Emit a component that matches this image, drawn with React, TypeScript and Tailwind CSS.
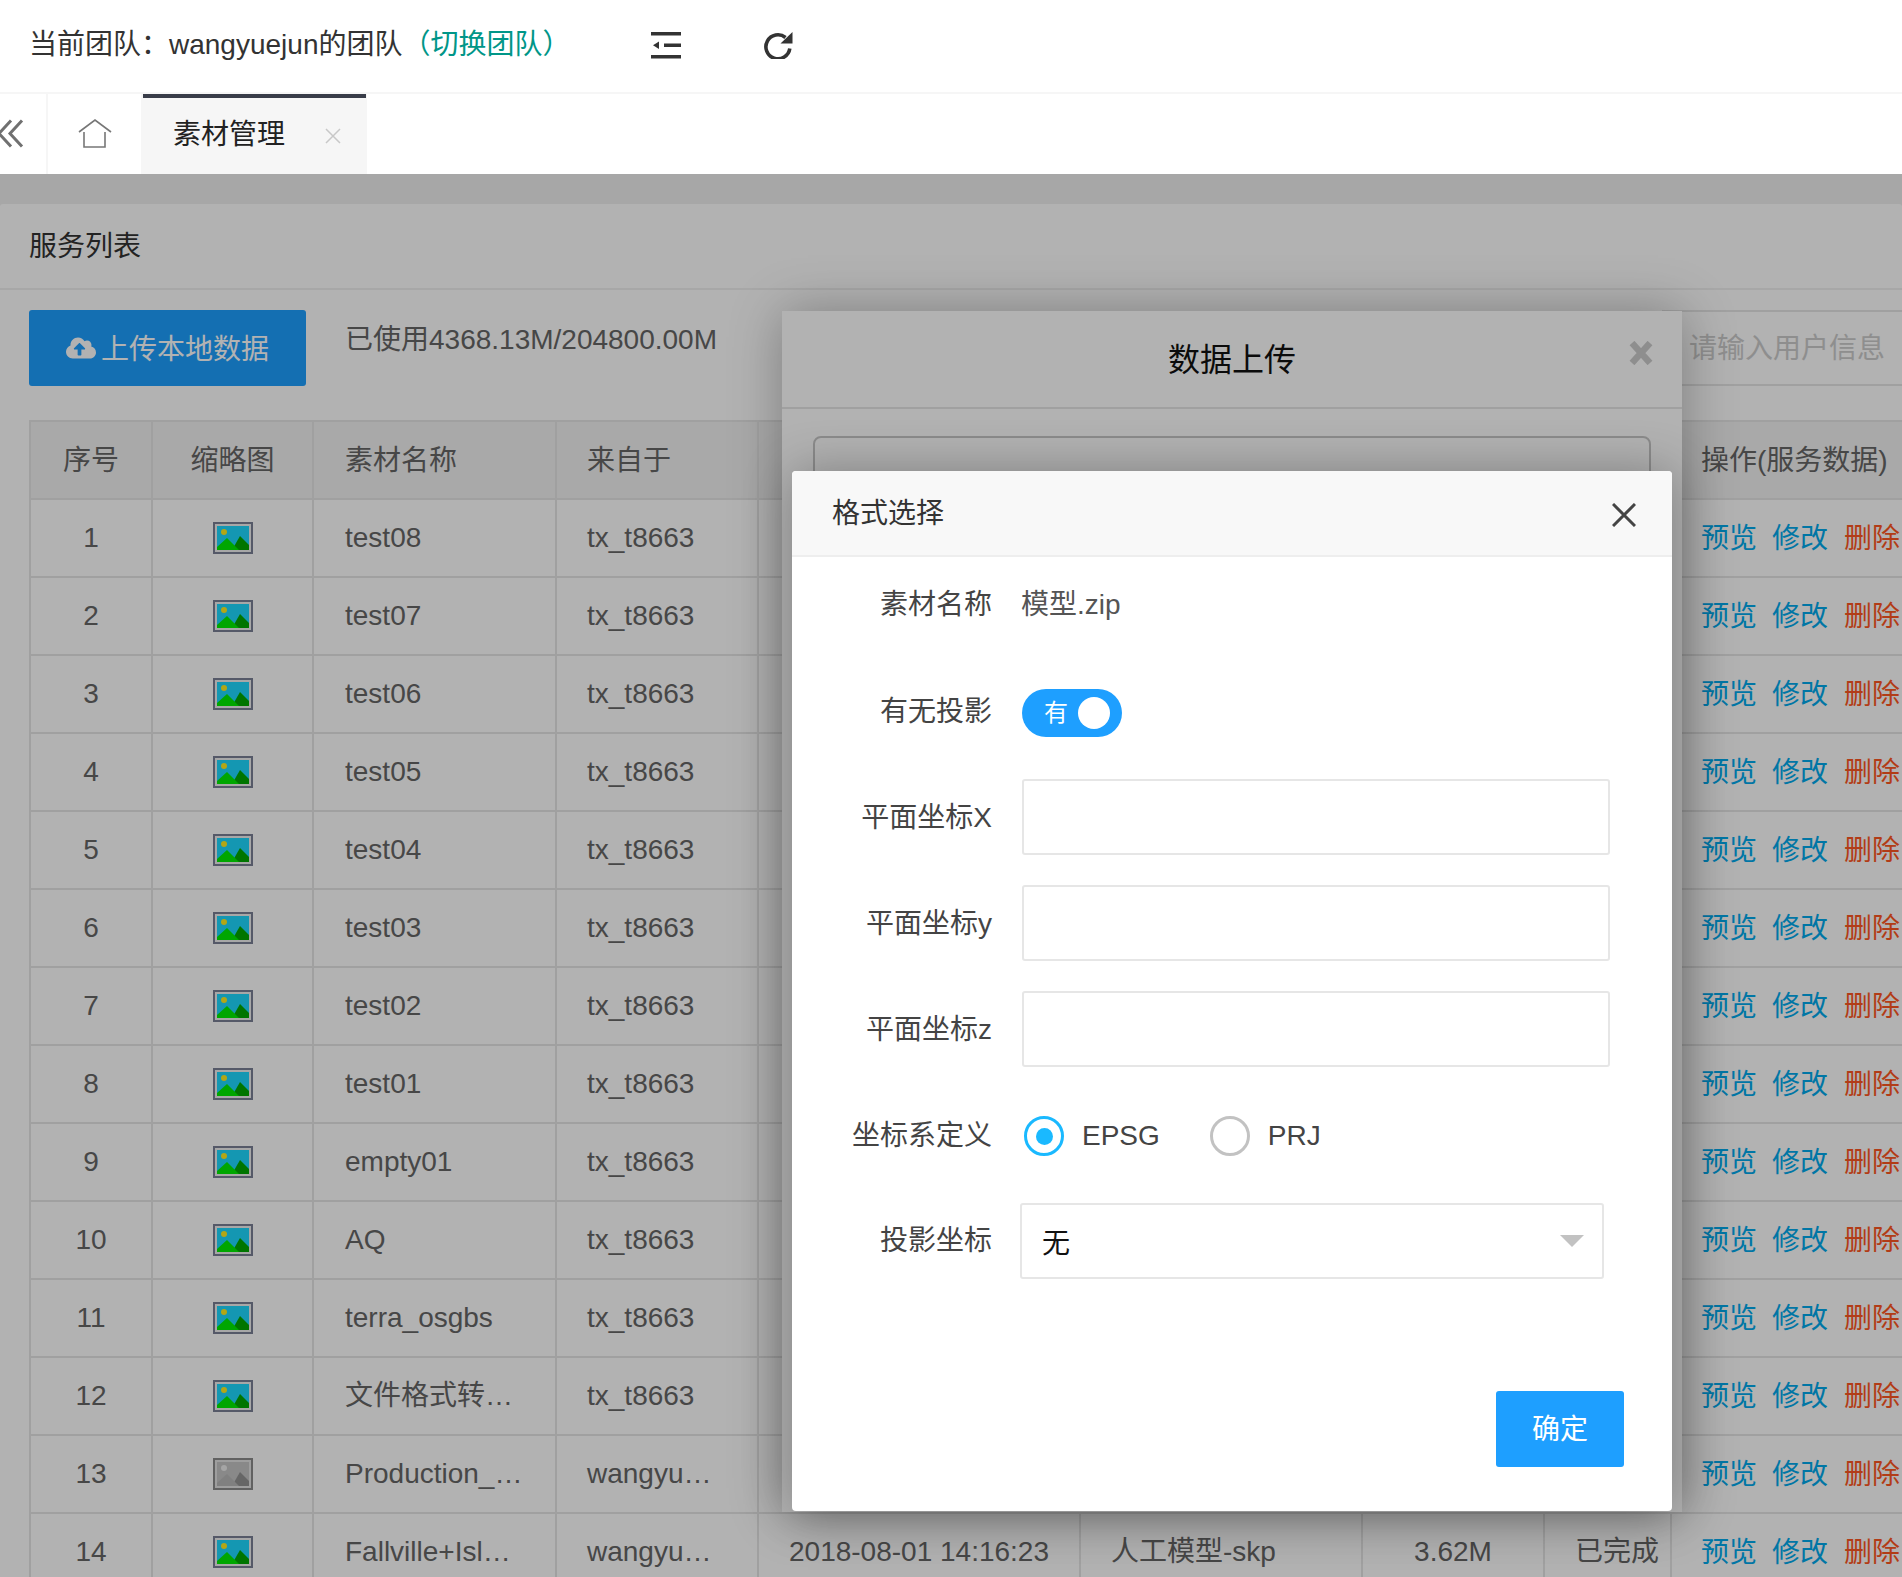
import { FaCloudUploadAlt } from "react-icons/fa";

const rows: [string, string, string][] = [
  ["1", "test08", "tx_t8663"],
  ["2", "test07", "tx_t8663"],
  ["3", "test06", "tx_t8663"],
  ["4", "test05", "tx_t8663"],
  ["5", "test04", "tx_t8663"],
  ["6", "test03", "tx_t8663"],
  ["7", "test02", "tx_t8663"],
  ["8", "test01", "tx_t8663"],
  ["9", "empty01", "tx_t8663"],
  ["10", "AQ", "tx_t8663"],
  ["11", "terra_osgbs", "tx_t8663"],
  ["12", "文件格式转…", "tx_t8663"],
  ["13", "Production_…", "wangyu…"],
  ["14", "Fallville+Isl…", "wangyu…"],
];

function Thumb({ gray }: { gray?: boolean }) {
  const c = gray
    ? { outer: "#8c8c8c", inner: "#e2e2e2", sky: "#c4c4c4", sun: "#ececec", m1: "#b8b8b8", m2: "#939393" }
    : { outer: "#7a8096", inner: "#f0f0f0", sky: "#1ed8ff", sun: "#ffee20", m1: "#00ee00", m2: "#00a800" };
  return (
    <svg width="40" height="32" viewBox="0 0 40 32" className="mx-auto block">
      <rect x="0" y="0" width="40" height="32" fill={c.outer} />
      <rect x="2" y="2" width="36" height="28" fill={c.inner} />
      <rect x="4" y="4" width="32" height="24" fill={c.sky} />
      <circle cx="11" cy="10" r="3" fill={c.sun} />
      <path d="M19 28 L27 14 L36 23 L36 28 Z" fill={c.m2} />
      <path d="M4 28 L4 25 L14 16 L26 28 Z" fill={c.m1} />
    </svg>
  );
}

function Label({ children }: { children: string }) {
  return <div className="w-[200px] shrink-0 text-right text-[#444]">{children}</div>;
}

function Field({ label, top }: { label: string; top: string }) {
  return (
    <div className={`flex h-[76px] items-center ${top}`}>
      <div className="translate-y-[1px]">
        <Label>{label}</Label>
      </div>
      <div className="ml-[30px] h-[76px] w-[588px] rounded-[3px] border-2 border-[#e6e6e6] bg-white" />
    </div>
  );
}

const cell = "border-2 border-[#e6e6e6] h-[78px] p-0 pl-[30px] text-left font-normal whitespace-nowrap";
const cellName = "border-2 border-[#e6e6e6] h-[78px] p-0 pl-[31px] text-left font-normal whitespace-nowrap";
const cellLast = "border-2 border-[#e6e6e6] h-[78px] p-0 pl-[29px] text-left font-normal whitespace-nowrap";
const cellC = "border-2 border-[#e6e6e6] h-[78px] p-0 text-center font-normal whitespace-nowrap";

export default function App() {
  return (
    <div className="relative h-[1577px] w-[1902px] overflow-hidden bg-[#f0f0f0] font-['Liberation_Sans','Noto_Sans_CJK_SC',sans-serif] text-[28px] text-[#666]">
      {/* top bar */}
      <div className="flex h-[94px] items-center border-b-2 border-[#f6f6f6] bg-white pl-[29px]">
        <div className="w-[622px] -translate-y-[1px] text-[#333]">
          当前团队：wangyuejun的团队<span className="text-[#009688]">（切换团队）</span>
        </div>
        <svg width="30" height="27" viewBox="0 0 30 27" className="text-[#333] -mt-[1px]">
          <rect x="0" y="0" width="30" height="3.5" fill="currentColor" />
          <rect x="13" y="11.5" width="17" height="3.5" fill="currentColor" />
          <path d="M2 13.3 L8 9.5 L8 17 Z" fill="currentColor" />
          <rect x="0" y="23" width="30" height="3.5" fill="currentColor" />
        </svg>
        <svg width="29" height="28" viewBox="0 0 29 28" className="ml-[83px] -mt-[2px]">
          <path d="M21.5 6.5 A12 12 0 1 0 25.8 17.5" fill="none" stroke="#333" strokeWidth="3.6" />
          <path d="M28.5 1 L28.5 12.5 L16.5 12.5 Z" fill="#333" />
        </svg>
      </div>

      {/* tab bar */}
      <div className="flex h-[80px] bg-white">
        <div className="flex h-full w-[48px] shrink-0 items-center overflow-hidden border-r-2 border-[#f6f6f6]">
          <svg width="24" height="30" viewBox="0 0 24 30" className="shrink-0">
            <path d="M11 1.5 L-1 14.5 L11 27.5 M22 1.5 L10 14.5 L22 27.5" fill="none" stroke="#707070" strokeWidth="3" />
          </svg>
        </div>
        <div className="flex h-full w-[93px] shrink-0 items-center justify-center">
          <svg width="34" height="30" viewBox="0 0 34 30">
            <path d="M1 13 L17 1 L33 13 M6 13 L6 28 L27 28 L27 13" fill="none" stroke="#777" strokeWidth="1.6" />
          </svg>
        </div>
        <div className="relative flex h-full w-[226px] shrink-0 items-center bg-[#f6f6f6] pl-[32px] text-[#222]">
          <div className="absolute left-[2px] right-[1px] top-0 h-[4px] bg-[#393d49]" />
          <span className="translate-y-[1px]">素材管理</span>
          <svg width="16" height="16" viewBox="0 0 16 16" className="ml-[40px] mt-[3px]">
            <path d="M1 1 L15 15 M15 1 L1 15" stroke="#c8c8c8" strokeWidth="1.5" />
          </svg>
        </div>
      </div>

      {/* page body */}
      <div className="pt-[30px]">
        <div className="rounded-[3px] bg-white">
          <div className="flex h-[86px] items-center border-b-2 border-[#f0f0f0] pl-[29px] pt-[2px] text-[#333]">服务列表</div>
          <div className="flex items-start pl-[29px] pt-[20px]">
            <div className="flex h-[76px] w-[277px] shrink-0 items-center justify-center gap-[5px] rounded-[3px] bg-[#1e9fff] text-white">
              <FaCloudUploadAlt size={30} />
              <span className="translate-y-[2px]">上传本地数据</span>
            </div>
            <div className="ml-[39px] pt-[11px] leading-[38px]">已使用4368.13M/204800.00M</div>
            <div className="ml-auto flex h-[76px] w-[240px] shrink-0 items-center border-y-2 border-[#e6e6e6] pl-[27px] text-[#ccc]">
              <span className="translate-y-[1px]">请输入用户信息</span>
            </div>
          </div>
          <div className="pl-[29px] pt-[34px]">
            <table className="w-[2183px] table-fixed border-collapse">
              <colgroup>
                <col className="w-[122px]" />
                <col className="w-[161px]" />
                <col className="w-[243px]" />
                <col className="w-[202px]" />
                <col className="w-[322px]" />
                <col className="w-[282px]" />
                <col className="w-[182px]" />
                <col className="w-[127px]" />
                <col className="w-[542px]" />
              </colgroup>
              <thead>
                <tr className="bg-[#f2f2f2]">
                  <th className={cellC}><span className="inline-block translate-y-[1px]">序号</span></th>
                  <th className={cellC}><span className="inline-block translate-y-[1px]">缩略图</span></th>
                  <th className={cellName}><span className="inline-block translate-y-[1px]">素材名称</span></th>
                  <th className={cell}><span className="inline-block translate-y-[1px]">来自于</span></th>
                  <th className={cell}></th>
                  <th className={cell}></th>
                  <th className={cell}></th>
                  <th className={cell}></th>
                  <th className={cellLast}><span className="inline-block translate-y-[1px]">操作(服务数据)</span></th>
                </tr>
              </thead>
              <tbody>
                {rows.map((r) => (
                  <tr key={r[0]}>
                    <td className={cellC}>{r[0]}</td>
                    <td className={cellC}>
                      <Thumb gray={r[0] === "13"} />
                    </td>
                    <td className={cellName}>{r[1]}</td>
                    <td className={cell}>{r[2]}</td>
                    <td className={cell}>{r[0] === "14" ? "2018-08-01 14:16:23" : ""}</td>
                    <td className={cell}>{r[0] === "14" ? "人工模型-skp" : ""}</td>
                    <td className={cellC}>{r[0] === "14" ? "3.62M" : ""}</td>
                    <td className={cell}>{r[0] === "14" ? "已完成" : ""}</td>
                    <td className={cellLast}>
                      <div className="translate-y-[1px]">
                        <span className="text-[#01aaed]">预览</span>
                        <span className="ml-[15px] text-[#01aaed]">修改</span>
                        <span className="ml-[16px] text-[#ff5722]">删除</span>
                      </div>
                    </td>
                  </tr>
                ))}
              </tbody>
            </table>
          </div>
        </div>
      </div>

      {/* first dialog */}
      <div className="absolute left-[782px] top-[311px] z-10 h-[1201px] w-[900px] bg-white shadow-[1px_1px_50px_rgba(0,0,0,0.3)]">
        <div className="relative flex h-[98px] items-center justify-center border-b-2 border-[#e6e6e6] text-[32px] text-[#111]">
          <span className="translate-y-[1px]">数据上传</span>
          <svg width="24" height="24" viewBox="0 0 24 24" className="absolute right-[29px] top-[30px]">
            <path d="M3 2 L21 22 M21 2 L3 22" stroke="#ccc" strokeWidth="6.5" />
          </svg>
        </div>
        <div className="mx-[31px] mt-[27px] h-[1000px] rounded-[8px] border-2 border-[#c8c8c8]" />
      </div>

      {/* overlay */}
      <div className="absolute inset-x-0 bottom-0 top-[174px] z-20 bg-black/30" />

      {/* second dialog */}
      <div className="absolute left-[792px] top-[471px] z-30 h-[1040px] w-[880px] rounded-[4px] bg-white shadow-[1px_1px_50px_rgba(0,0,0,0.3)]">
        <div className="relative flex h-[86px] items-center rounded-t-[4px] border-b-2 border-[#eee] bg-[#f8f8f8] pl-[40px] text-[#333]">
          <span className="translate-y-[1px]">格式选择</span>
          <svg width="24" height="24" viewBox="0 0 24 24" className="absolute left-[820px] top-[32px]">
            <path d="M1 1 L23 23 M23 1 L1 23" stroke="#444" strokeWidth="3" />
          </svg>
        </div>

        <div className="pt-[23px]">
          <div className="flex h-[48px] items-center">
            <div className="translate-y-[1px]">
              <Label>素材名称</Label>
            </div>
            <div className="ml-[29px] translate-y-[1px] text-[#555]">模型.zip</div>
          </div>

          <div className="mt-[61px] flex h-[48px] items-center">
            <div className="-translate-y-[1px]">
              <Label>有无投影</Label>
            </div>
            <div className="ml-[30px] flex h-[48px] w-[100px] items-center justify-end gap-[10px] rounded-full bg-[#1e9fff] pr-[12px] text-[24px] text-white">
              <span>有</span>
              <span className="h-[32px] w-[32px] rounded-full bg-white" />
            </div>
          </div>

          <Field label="平面坐标X" top="mt-[42px]" />
          <Field label="平面坐标y" top="mt-[30px]" />
          <Field label="平面坐标z" top="mt-[30px]" />

          <div className="mt-[49px] flex h-[40px] items-center">
            <Label>坐标系定义</Label>
            <div className="ml-[32px] flex h-[40px] w-[40px] items-center justify-center rounded-full border-[3px] border-[#1ab9ff]">
              <span className="h-[17px] w-[17px] rounded-full bg-[#1ab9ff]" />
            </div>
            <span className="ml-[18px] text-[#444]">EPSG</span>
            <div className="ml-[50px] h-[40px] w-[40px] rounded-full border-[3px] border-[#c2c2c2]" />
            <span className="ml-[18px] text-[#444]">PRJ</span>
          </div>

          <div className="mt-[47px] flex h-[76px] items-center">
            <Label>投影坐标</Label>
            <div className="ml-[28px] flex h-[76px] w-[584px] items-center justify-between rounded-[3px] border-2 border-[#e6e6e6] pl-[20px] pr-[18px] text-[#111]">
              <span className="translate-y-[3px]">无</span>
              <svg width="24" height="12" viewBox="0 0 24 12">
                <path d="M0 0 L24 0 L12 12 Z" fill="#c2c2c2" />
              </svg>
            </div>
          </div>

          <div className="mt-[112px] flex justify-end pr-[48px]">
            <div className="flex h-[76px] w-[128px] items-center justify-center rounded-[3px] bg-[#1e9fff] text-white">
              <span className="translate-y-[1px]">确定</span>
            </div>
          </div>
        </div>
      </div>
    </div>
  );
}
